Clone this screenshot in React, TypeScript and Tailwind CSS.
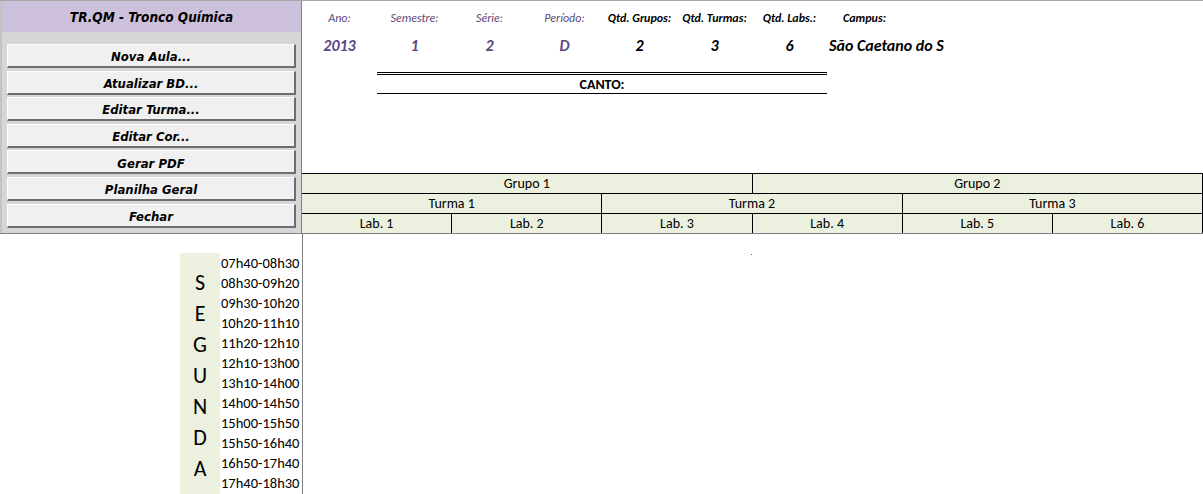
const buttons = ['Nova Aula...', 'Atualizar BD...', 'Editar Turma...', 'Editar Cor...', 'Gerar PDF', 'Planilha Geral', 'Fechar'];

const infoCols = [
  { label: 'Ano:', value: '2013', purple: true },
  { label: 'Semestre:', value: '1', purple: true },
  { label: 'Série:', value: '2', purple: true },
  { label: 'Período:', value: 'D', purple: true },
  { label: 'Qtd. Grupos:', value: '2', purple: false },
  { label: 'Qtd. Turmas:', value: '3', purple: false },
  { label: 'Qtd. Labs.:', value: '6', purple: false },
];

const times = [
  '07h40-08h30', '08h30-09h20', '09h30-10h20', '10h20-11h10', '11h20-12h10', '12h10-13h00',
  '13h10-14h00', '14h00-14h50', '15h00-15h50', '15h50-16h40', '16h50-17h40', '17h40-18h30',
];

const calibri = "font-['Carlito','Lato',sans-serif]";
const tahoma = "font-['DejaVu_Sans_Condensed','DejaVu_Sans',sans-serif]";

function SheetButton({ label }: { label: string }) {
  return (
    <div
      className={`h-[24px] pt-[3px] flex items-center justify-center bg-[#f0f0f0] border-t border-l border-white border-r-2 border-b-2 border-r-[#6e6e6e] border-b-[#6e6e6e] text-[13px] font-bold italic text-black ${tahoma}`}
    >
      {label}
    </div>
  );
}

export default function App() {
  return (
    <div className="w-[1203px] h-[494px] bg-white border-t border-[#a6a6a6] overflow-hidden relative">
      <div className="flex h-[232px] border-b border-[#7f7f7f] box-content">
        {/* left panel */}
        <div className="w-[302px] shrink-0 border-r border-[#7f7f7f] bg-[#d6d6d6] border-l-2 border-l-[#c4c4c4] flex flex-col">
          <div className={`h-[31px] pt-[1px] bg-[#ccc0da] flex items-center justify-center text-[13.5px] font-bold italic text-black ${tahoma}`}>
            TR.QM - Tronco Química
          </div>
          <div className="flex flex-col gap-[2.6px] pl-[5px] pr-[5px] pt-[12px]">
            {buttons.map((b) => (
              <SheetButton key={b} label={b} />
            ))}
          </div>
        </div>

        {/* right area */}
        <div className="flex-1 flex flex-col">
          <div className={`h-[172px] ${calibri}`}>
            <div className="grid grid-cols-[repeat(8,75px)] h-[33px] items-center text-[12px] italic pt-[1px]">
              {infoCols.map((c) => (
                <div
                  key={c.label}
                  className={`text-center ${c.purple ? 'text-[#60497a]' : 'text-black font-bold'}`}
                >
                  {c.label}
                </div>
              ))}
              <div className="text-center text-black font-bold">Campus:</div>
            </div>
            <div className="grid grid-cols-[repeat(8,75px)] h-[20px] items-center text-[16px] font-bold italic">
              {infoCols.map((c) => (
                <div
                  key={c.label}
                  className={`text-center ${c.purple ? 'text-[#5b4782]' : 'text-black'}`}
                >
                  {c.value}
                </div>
              ))}
              <div className="text-black whitespace-nowrap pl-[2px]">São Caetano do S</div>
            </div>
            <div className="ml-[75px] mt-[18px] w-[450px] border-t-[3px] border-double border-black border-b h-[22px] flex items-center justify-center text-[14px] font-bold text-black">
              CANTO:
            </div>
          </div>

          {/* header table */}
          <div className={`bg-[#ebf1de] text-[14px] text-black ${calibri}`}>
            <div className="flex h-[20px] border-t border-black border-r">
              <div className="flex-1 flex items-center justify-center">Grupo 1</div>
              <div className="flex-1 flex items-center justify-center border-l border-black">Grupo 2</div>
            </div>
            <div className="flex h-[20px] border-t border-black border-r">
              <div className="flex-1 flex items-center justify-center">Turma 1</div>
              <div className="flex-1 flex items-center justify-center border-l border-black">Turma 2</div>
              <div className="flex-1 flex items-center justify-center border-l border-black">Turma 3</div>
            </div>
            <div className="flex h-[20px] border-t border-black border-r">
              {[1, 2, 3, 4, 5, 6].map((n) => (
                <div
                  key={n}
                  className={`flex-1 flex items-center justify-center ${n > 1 ? 'border-l border-black' : ''}`}
                >
                  Lab. {n}
                </div>
              ))}
            </div>
          </div>
        </div>
      </div>

      {/* bottom area */}
      <div className="flex h-[260px]">
        <div className={`w-[303px] shrink-0 border-r border-[#7f7f7f] pl-[180px] pt-[19px] flex ${calibri}`}>
          <div className="w-[40px] h-[245px] bg-[#ebf1de] flex flex-col items-center justify-center text-[22px] leading-[31px] text-black">
            {'SEGUNDA'.split('').map((l, i) => (
              <span key={i}>{l}</span>
            ))}
          </div>
          <div className="pl-[1px] pt-[1px] flex flex-col text-[14.5px] text-black">
            {times.map((t) => (
              <div key={t} className="h-[20px] flex items-center whitespace-nowrap">
                {t}
              </div>
            ))}
          </div>
        </div>
        <div className="flex-1" />
      </div>
      <div className="absolute left-[751px] top-[253px] w-px h-px bg-[#606060]" />
    </div>
  );
}
